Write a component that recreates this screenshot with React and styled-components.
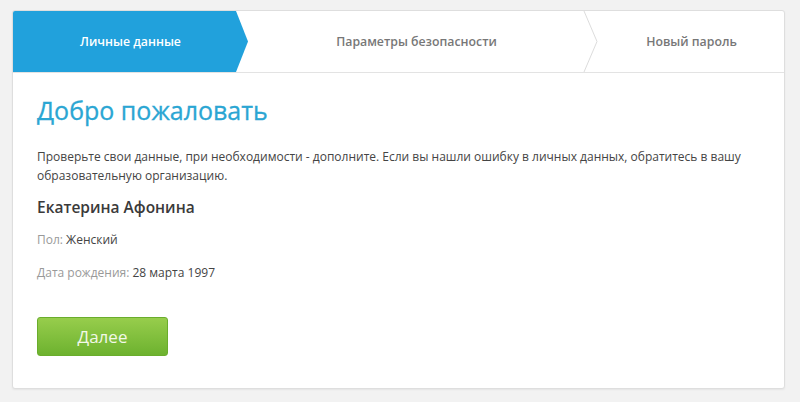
import React from 'react'
import styled, { createGlobalStyle } from 'styled-components'

const GlobalStyle = createGlobalStyle`
  body {
    margin: 0;
    background: #f2f2f2;
    font-family: "Open Sans", "Liberation Sans", sans-serif;
    color: #444;
  }
`

const steps = [
  { title: 'Личные данные', active: true },
  { title: 'Параметры безопасности' },
  { title: 'Новый пароль' },
]

const App = () => {
  return (
    <Page>
      <GlobalStyle />
      <Card>
        <Steps>
          {steps.map((s, i) => (
            <Step key={i} $active={s.active} $arrow={i === 1}>
              {s.title}
              {i === 1 && (
                <Chevron viewBox="0 0 16 62" preserveAspectRatio="none">
                  <polyline points="1,0 14,31 1,62" fill="none" stroke="#dcdcdc" strokeWidth="1" />
                </Chevron>
              )}
            </Step>
          ))}
        </Steps>
        <Body>
          <Title>Добро пожаловать</Title>
          <Text>
            Проверьте свои данные, при необходимости - дополните. Если вы нашли ошибку в личных данных, обратитесь в вашу
            образовательную организацию.
          </Text>
          <Name>Екатерина Афонина</Name>
          <Field>
            <Label>Пол: </Label>Женский
          </Field>
          <Field>
            <Label>Дата рождения: </Label>28 марта 1997
          </Field>
          <NextButton type="button">Далее</NextButton>
        </Body>
      </Card>
    </Page>
  )
}

const Page = styled.div`
  padding: 10px 15px 14px 12px;
`

const Card = styled.div`
  background: #fff;
  border: 1px solid #dedede;
  border-radius: 3px;
  box-shadow: 0 1px 2px rgba(0, 0, 0, 0.06);
  overflow: hidden;
`

const Steps = styled.div`
  display: grid;
  grid-template-columns: 235px 351px 1fr;
  height: 61px;
  border-bottom: 1px solid #e3e3e3;
`

const Step = styled.div`
  position: relative;
  display: flex;
  align-items: center;
  justify-content: center;
  padding-right: ${({ $arrow }) => ($arrow ? '14px' : '0')};
  font-size: 12.3px;
  font-weight: 600;
  color: ${({ $active }) => ($active ? '#fff' : '#777')};
  background: ${({ $active }) => ($active ? '#21a1dc' : 'transparent')};
  clip-path: ${({ $active }) =>
    $active ? 'polygon(0 0, calc(100% - 12px) 0, 100% 50%, calc(100% - 12px) 100%, 0 100%)' : 'none'};
`

const Chevron = styled.svg`
  position: absolute;
  right: 0;
  top: 0;
  width: 16px;
  height: 100%;
`

const Body = styled.div`
  padding: 19px 24px 32px;
`

const Title = styled.h1`
  margin: 0 0 19px;
  font-size: 25px;
  font-weight: 400;
  line-height: 36px;
  color: #2ba6d3;
  -webkit-text-stroke: 0.3px #2ba6d3;
`

const Text = styled.p`
  margin: 0 0 10px;
  font-size: 12px;
  line-height: 19px;
  color: #444;
`

const Name = styled.div`
  font-size: 15.5px;
  font-weight: 600;
  line-height: 24px;
  color: #3a3a3a;
  margin-bottom: 12px;
`

const Field = styled.div`
  font-size: 12px;
  line-height: 18px;
  color: #444;
  margin-bottom: 15px;
`

const Label = styled.span`
  color: #999;
`

const NextButton = styled.button`
  margin-top: 20px;
  width: 131px;
  height: 39px;
  border: 1px solid #6aad2c;
  border-radius: 3px;
  background: linear-gradient(#97cd4c, #6db22f);
  color: #f2f8e8;
  font-family: "Open Sans", "Liberation Sans", sans-serif;
  font-size: 17px;
  cursor: pointer;
`

export default App
